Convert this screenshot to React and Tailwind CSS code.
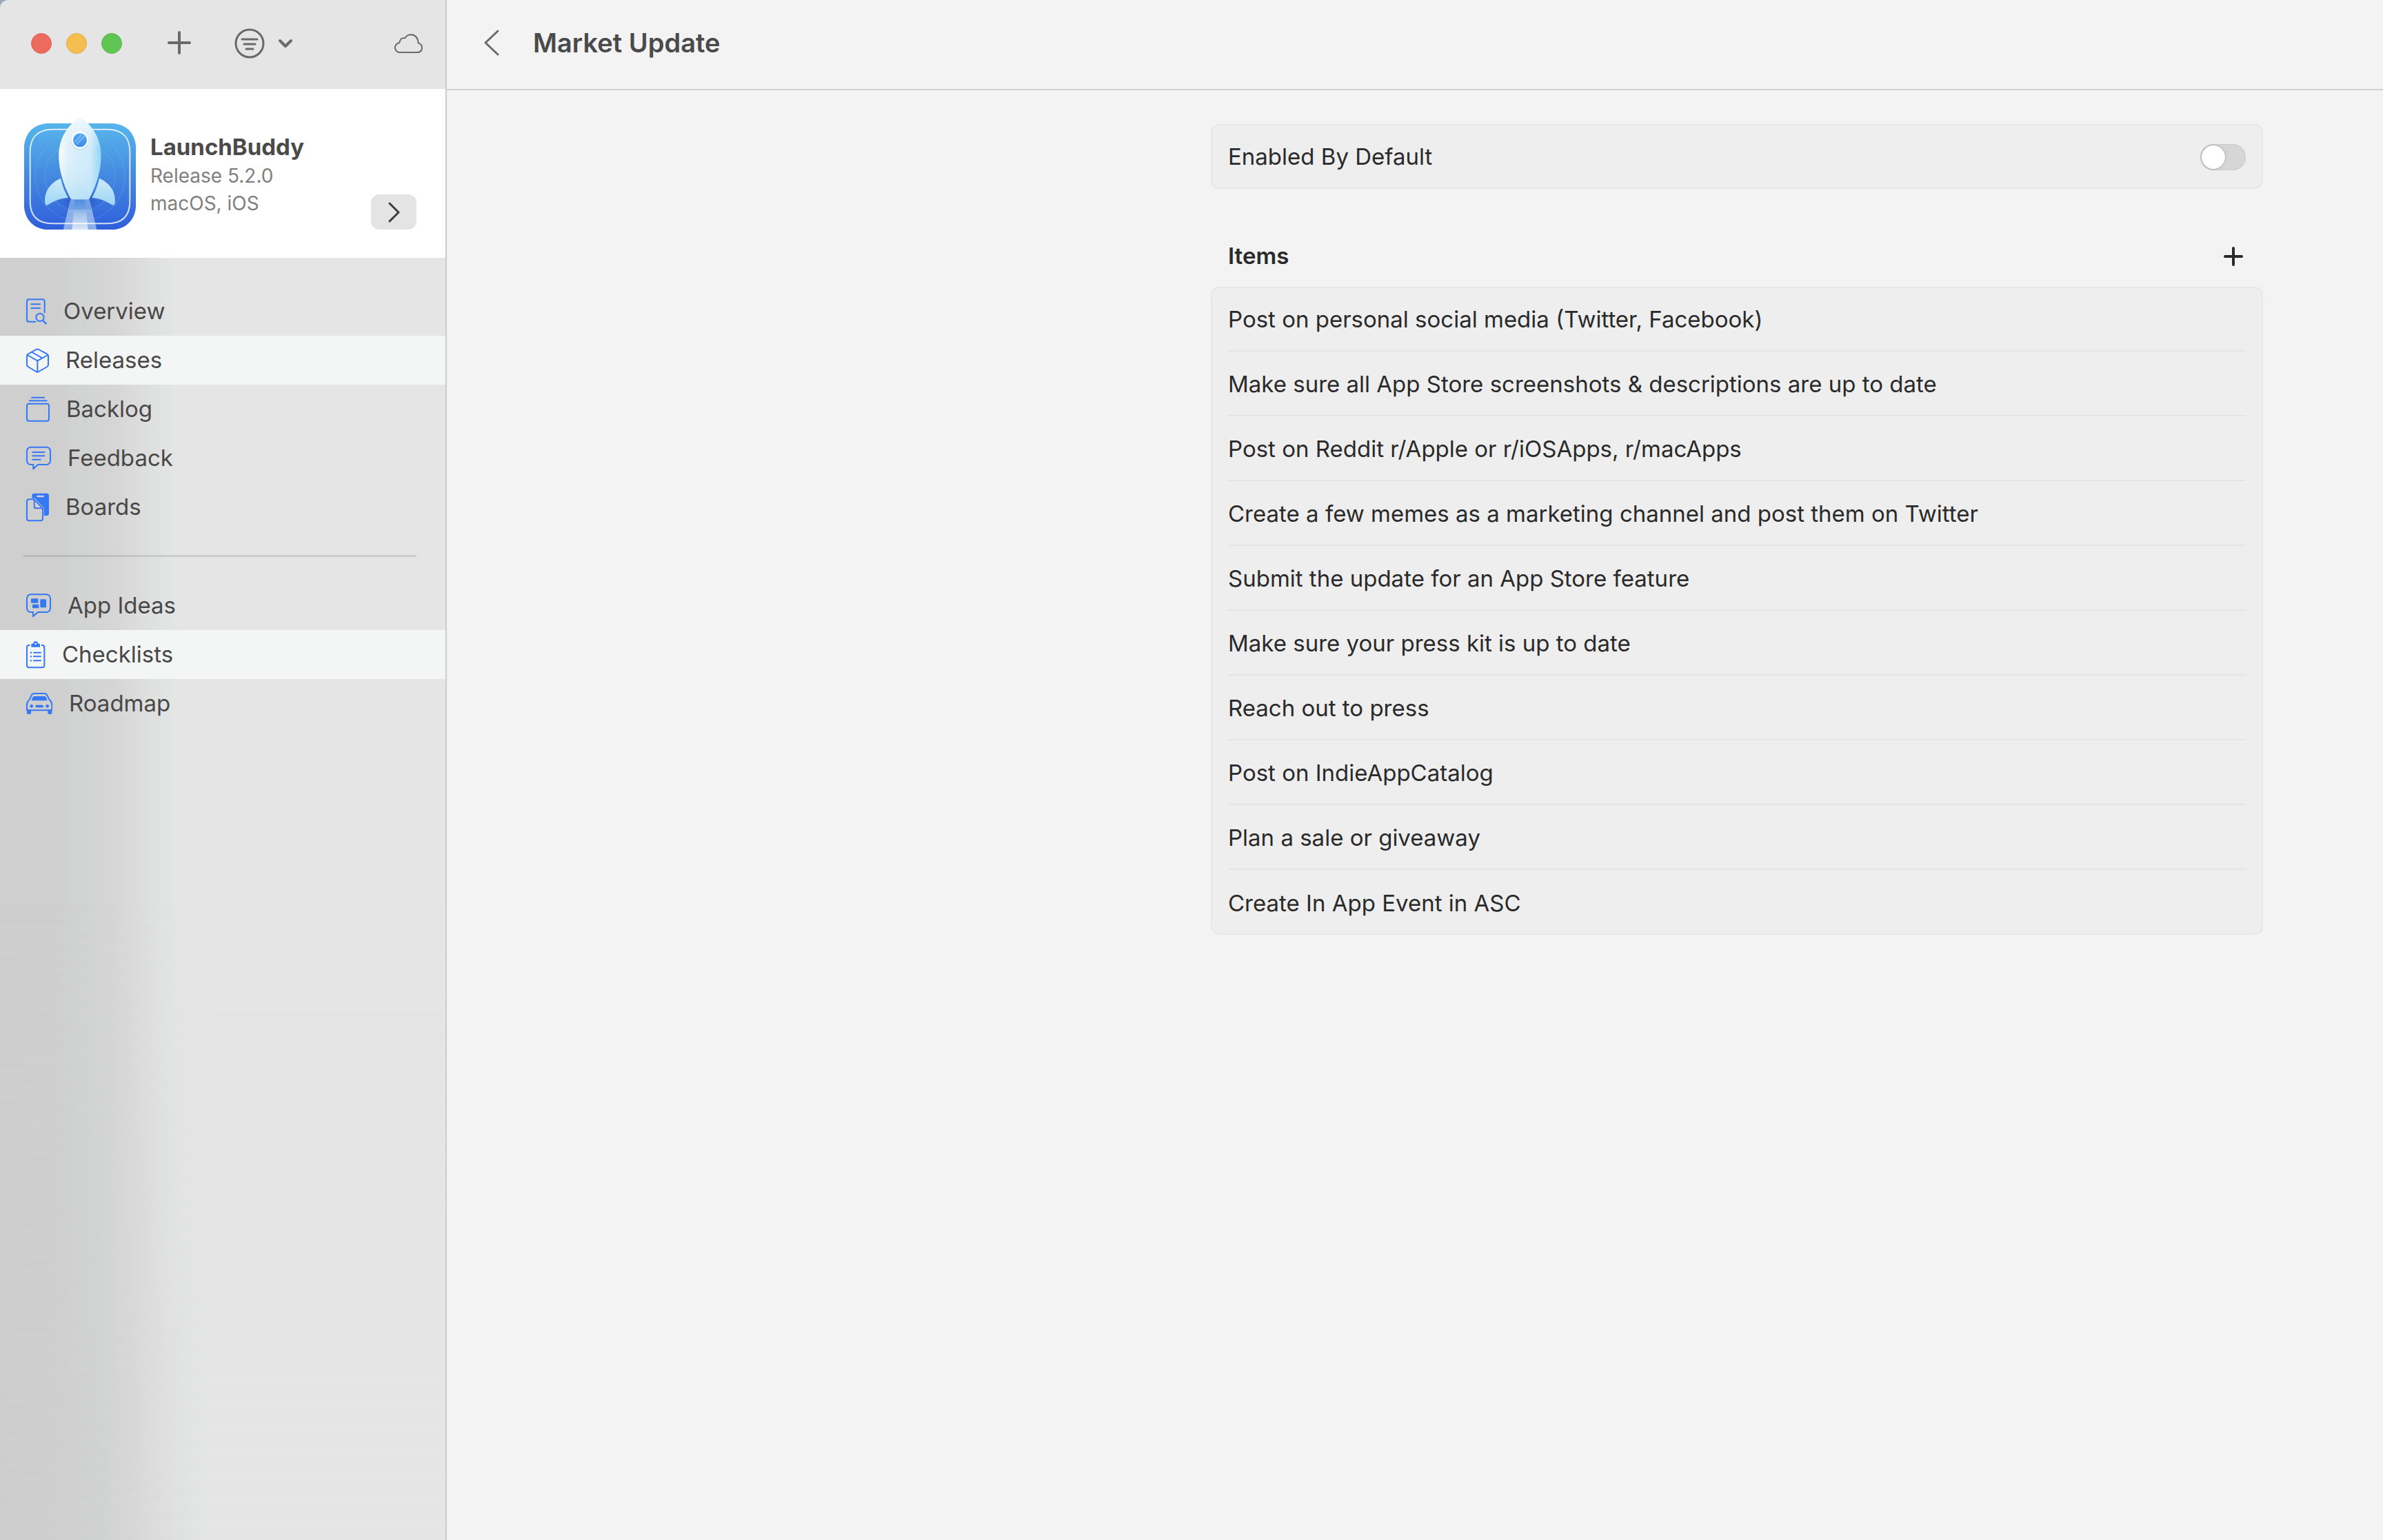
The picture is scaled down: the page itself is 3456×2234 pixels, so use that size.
const PRIMARY_LINKS = [
  { label: "Overview", Icon: OverviewIcon },
  { label: "Releases", Icon: BoxIcon, active: true },
  { label: "Backlog", Icon: StackIcon },
  { label: "Feedback", Icon: FeedbackIcon },
  { label: "Boards", Icon: BoardsIcon },
];

const SECONDARY_LINKS = [
  { label: "App Ideas", Icon: IdeasIcon },
  { label: "Checklists", Icon: ClipboardIcon, active: true },
  { label: "Roadmap", Icon: CarIcon },
];

const ITEMS = [
  "Post on personal social media (Twitter, Facebook)",
  "Make sure all App Store screenshots & descriptions are up to date",
  "Post on Reddit r/Apple or r/iOSApps, r/macApps",
  "Create a few memes as a marketing channel and post them on Twitter",
  "Submit the update for an App Store feature",
  "Make sure your press kit is up to date",
  "Reach out to press",
  "Post on IndieAppCatalog",
  "Plan a sale or giveaway",
  "Create In App Event in ASC",
];

const lineProps = {
  fill: "none",
  stroke: "currentColor",
  strokeWidth: 6,
  strokeLinecap: "round",
  strokeLinejoin: "round",
  "aria-hidden": true,
};

function OverviewIcon() {
  return (
    <svg className="h-[38px] w-[30px] shrink-0" viewBox="115 91 90 114" {...lineProps}>
      <path d="M155 192H127a9 9 0 0 1-9-9V104a9 9 0 0 1 9-9H186a9 9 0 0 1 9 9V152" />
      <path d="M137 116H175M137 133H175" />
      <circle cx="175" cy="173" r="17" />
      <path d="M188 187L201 200" strokeWidth="7" />
    </svg>
  );
}

function BoxIcon() {
  return (
    <svg className="h-[36px] w-[33px] shrink-0" viewBox="115 312 99 108" {...lineProps}>
      <path d="M158 318q6-3 12 0L206 338q5 3 5 8V385q0 5-5 8L170 414q-6 3-12 0L123 393q-5-3-5-8V346q0-5 5-8Z" />
      <path d="M120 342L164 367L209 342M164 367V415M140 330L185 355" />
    </svg>
  );
}

function StackIcon() {
  return (
    <svg className="h-[37px] w-[34px] shrink-0" viewBox="115 520 102 111" {...lineProps}>
      <rect x="118" y="552" width="96" height="75" rx="9" />
      <path d="M129 539H204M139 525H194" />
    </svg>
  );
}

function FeedbackIcon() {
  return (
    <svg className="h-[35px] w-[36px] shrink-0" viewBox="115 741 108 105" {...lineProps}>
      <path d="M135 746H203a17 17 0 0 1 17 17V805a17 17 0 0 1-17 17H166L146 841V822H135a17 17 0 0 1-17-17V763a17 17 0 0 1 17-17Z" />
      <path d="M143 768H194M143 784H194M143 800H177" />
    </svg>
  );
}

function BoardsIcon() {
  return (
    <svg className="h-[42px] w-[33px] shrink-0" viewBox="115 941 99 126" {...lineProps}>
      <rect x="140" y="943" width="74" height="97" rx="10" fill="currentColor" stroke="none" />
      <path d="M164 956H189" stroke="#d2d3d3" strokeWidth="7" />
      <path d="M127 969H150L187 1008V1053a9 9 0 0 1-9 9H127a9 9 0 0 1-9-9V978a9 9 0 0 1 9-9Z" fill="#d0d0d0" stroke="#d0d0d0" strokeWidth="10" />
      <path d="M127 969H149L187 1008V1053a9 9 0 0 1-9 9H127a9 9 0 0 1-9-9V978a9 9 0 0 1 9-9Z" />
      <path d="M150 971V1000a8 8 0 0 0 8 8H186" />
    </svg>
  );
}

function IdeasIcon() {
  return (
    <svg className="h-[35px] w-[36px] shrink-0" viewBox="55 62 108 105" {...lineProps}>
      <path d="M75 66H143a17 17 0 0 1 17 17V126a17 17 0 0 1-17 17H106L85 162V143H75a17 17 0 0 1-17-17V83a17 17 0 0 1 17-17Z" />
      <g fill="currentColor" stroke="none">
        <rect x="76" y="84" width="31" height="19" rx="3" />
        <rect x="116" y="87" width="26" height="36" rx="3" />
        <rect x="82" y="109" width="28" height="17" rx="3" />
      </g>
    </svg>
  );
}

function ClipboardIcon() {
  return (
    <svg className="h-[40px] w-[28px] shrink-0" viewBox="55 271 84 120" {...lineProps}>
      <path d="M69 289H67a9 9 0 0 0-9 9V377a9 9 0 0 0 9 9H125a9 9 0 0 0 9-9V298a9 9 0 0 0-9-9H123" />
      <path d="M77 297V286q0-4 4-4H86a10 10 0 0 1 20 0H111q4 0 4 4V297Z" fill="currentColor" stroke="none" />
      <circle cx="96" cy="283" r="4" fill="#f4f6f5" stroke="none" />
      <path d="M75 321H76M75 338H76M75 356H76" strokeWidth="7" />
      <path d="M88 321H118M88 338H118M88 356H118" />
    </svg>
  );
}

function CarIcon() {
  return (
    <svg className="h-[31px] w-[38px] shrink-0" viewBox="55 492 114 93" {...lineProps}>
      <path d="M58 545q0-14 11-23L78 503q4-8 13-8H133q9 0 13 8L156 522q11 9 11 23V568H58Z" />
      <g fill="currentColor" stroke="none">
        <path d="M90 507H135q5 0 7 5l5 14H78l5-14q2-5 7-5Z" />
        <circle cx="78" cy="550" r="7" />
        <circle cx="147" cy="550" r="7" />
        <rect x="95" y="545" width="35" height="11" rx="5" />
        <path d="M58 566H76V580q0 5-5 5H63q-5 0-5-5ZM149 566H167V580q0 5-5 5H154q-5 0-5-5Z" />
      </g>
    </svg>
  );
}

function CloudIcon() {
  return (
    <svg className="h-[30px] w-[42px]" viewBox="1053 83 126 90" {...lineProps}>
      <path d="M1079 167a21 21 0 0 1-4-42q2-23 25-21q8-14 26-14q28 2 31 36q16 6 16 21q-1 20-21 20Z" />
    </svg>
  );
}

function RocketLogo() {
  return (
    <svg className="size-[164px] shrink-0" viewBox="42 28 492 492" role="img" aria-label="LaunchBuddy icon">
      <defs>
        <linearGradient id="tile" x1="0" y1="0" x2="0" y2="1">
          <stop offset="0" stopColor="#57b5ea" />
          <stop offset="0.5" stopColor="#4489e0" />
          <stop offset="1" stopColor="#2f5edb" />
        </linearGradient>
        <linearGradient id="hull" x1="0" y1="0" x2="1" y2="0">
          <stop offset="0" stopColor="#ffffff" />
          <stop offset="0.2" stopColor="#e0f1fb" />
          <stop offset="0.75" stopColor="#cdeafa" />
          <stop offset="1" stopColor="#7fcdf7" />
        </linearGradient>
        <linearGradient id="hullShade" x1="0" y1="0" x2="0" y2="1">
          <stop offset="0" stopColor="#ffffff" stopOpacity="0.9" />
          <stop offset="0.4" stopColor="#e2f2fc" stopOpacity="0.2" />
          <stop offset="1" stopColor="#a6daf5" stopOpacity="0.8" />
        </linearGradient>
        <linearGradient id="fin" x1="0" y1="0" x2="0" y2="1">
          <stop offset="0" stopColor="#cdeafc" />
          <stop offset="1" stopColor="#9ed6f3" />
        </linearGradient>
        <linearGradient id="glass" x1="0" y1="0" x2="0" y2="1">
          <stop offset="0" stopColor="#58aaf0" />
          <stop offset="1" stopColor="#3b8df0" />
        </linearGradient>
        <linearGradient id="flame" x1="0" y1="0" x2="0" y2="1">
          <stop offset="0" stopColor="#4f93dd" />
          <stop offset="0.5" stopColor="#a3c3ec" />
          <stop offset="1" stopColor="#dbe6f9" />
        </linearGradient>
        <radialGradient id="shade">
          <stop offset="0" stopColor="#1f48bd" stopOpacity="0.8" />
          <stop offset="1" stopColor="#1f48bd" stopOpacity="0" />
        </radialGradient>
        <clipPath id="tileClip">
          <path d="M160 54H416C496 54 532 104 532 170V402C532 468 496 518 416 518H160C80 518 44 468 44 402V170C44 104 80 54 160 54Z" />
        </clipPath>
      </defs>
      <g clipPath="url(#tileClip)">
        <rect x="44" y="54" width="488" height="464" fill="url(#tile)" />
        <g fill="none" stroke="#7fc4f5" strokeOpacity="0.22" strokeWidth="4">
          <circle cx="288" cy="285" r="152" />
          <circle cx="288" cy="285" r="195" />
        </g>
        <ellipse cx="288" cy="392" rx="100" ry="50" fill="url(#shade)" />
        <path d="M247 385H329L361 518H215Z" fill="#9dbcec" fillOpacity="0.85" />
        <path d="M266 385H310L323 518H253Z" fill="url(#flame)" />
        <path d="M247 385H329L336 430H240Z" fill="#4484dc" fillOpacity="0.35" />
      </g>
      <path d="M170 81H406C476 81 505 120 505 178V394C505 456 476 491 406 491H170C100 491 71 456 71 394V178C71 120 100 81 170 81Z" fill="none" stroke="#ffffff" strokeOpacity="0.78" strokeWidth="6" />
      <path d="M204 294C162 312 130 350 136 402Q138 414 148 410C176 392 206 380 237 379Q214 340 204 294Z" fill="url(#fin)" />
      <path d="M372 294C414 312 446 350 440 402Q438 414 428 410C400 392 370 380 340 379Q362 340 372 294Z" fill="url(#fin)" />
      <path d="M288 29C330 54 380 110 380 195C380 265 356 330 330 380Q328 386 321 386H257Q250 386 246 380C220 330 196 265 196 195C196 110 246 54 288 29Z" fill="url(#hull)" />
      <path d="M288 29C330 54 380 110 380 195C380 265 356 330 330 380Q328 386 321 386H257Q250 386 246 380C220 330 196 265 196 195C196 110 246 54 288 29Z" fill="url(#hullShade)" fillOpacity="0.75" />
      <circle cx="288" cy="131" r="40" fill="#9fcdf5" fillOpacity="0.5" />
      <circle cx="288" cy="128" r="34" fill="url(#glass)" stroke="#fbfdff" strokeWidth="8" />
      <path d="M264 137L296 104M272 146L312 107" stroke="#8cc8f8" strokeOpacity="0.7" strokeWidth="6" />
    </svg>
  );
}

function NavLink({ label, Icon, active }) {
  return (
    <a
      href={"#" + label.toLowerCase().replace(" ", "-")}
      aria-current={active ? "true" : undefined}
      className={
        "relative flex h-[71px] items-center gap-6 pl-[38px] text-[33px] text-[#484848] " +
        (active ? "bg-[#f4f6f5]" : "")
      }
    >
      <span className="text-[#3478f6]">
        <Icon />
      </span>
      {label}
    </a>
  );
}

function Sidebar() {
  return (
    <aside className="flex w-[648px] shrink-0 flex-col overflow-hidden rounded-tl-[12px] border-r-2 border-[#cdcdcd] bg-[#e5e5e5]">
      <div className="flex h-[129px] items-center pb-[3px] pl-[45px] pr-8 text-[#6a6a6a]">
        <div className="flex gap-[21px]">
          <button aria-label="Close" className="size-[30px] rounded-full border border-[#dd6358] bg-[#ec6a5e]" />
          <button aria-label="Minimize" className="size-[30px] rounded-full border border-[#e0ac45] bg-[#f4bf4f]" />
          <button aria-label="Zoom" className="size-[30px] rounded-full border border-[#58b648] bg-[#61c554]" />
        </div>
        <button aria-label="Add" className="mb-[3px] ml-[65px]">
          <svg className="block size-[36px]" viewBox="0 0 36 36" {...lineProps} strokeWidth="4">
            <path d="M18 3V33M3 18H33" />
          </svg>
        </button>
        <button aria-label="Filter" className="ml-[62px] flex items-center gap-[19px]">
          <svg className="size-[44px]" viewBox="0 0 44 44" {...lineProps} strokeWidth="3">
            <circle cx="22" cy="22" r="20" />
            <path d="M11 16H33M14 23H30M17 30H27" />
          </svg>
          <svg className="h-[14px] w-[22px]" viewBox="0 0 22 14" {...lineProps} strokeWidth="4">
            <path d="M3 3L11 11L19 3" />
          </svg>
        </button>
        <button aria-label="Sync" className="ml-auto">
          <CloudIcon />
        </button>
      </div>

      <div className="flex h-[245px] items-center gap-5 bg-white pl-[34px] pr-[42px]">
        <RocketLogo />
        <div className="pt-[2px] text-[28px] leading-10 text-[#808080]">
          <h2 className="text-[33px] font-bold leading-[44px] text-[#4a4a4a]">LaunchBuddy</h2>
          <p>Release 5.2.0</p>
          <p>macOS, iOS</p>
        </div>
        <button aria-label="Show app details" className="mb-[41px] ml-auto flex h-[51px] w-[66px] items-center justify-center self-end rounded-[12px] bg-[#e4e4e4] text-[#3c3c3c]">
          <svg className="h-[30px] w-[20px]" viewBox="0 0 20 30" {...lineProps} strokeWidth="3">
            <path d="M4 2L17 15L4 28" />
          </svg>
        </button>
      </div>

      <div className="relative flex-1 bg-[linear-gradient(90deg,#cfcfcf_0px,#cfcfcf_85px,#d0d3d1_105px,#d5d5d5_160px,#dddddd_205px,#e2e4e3_242px,#e5e5e5_262px)] pt-[42px]">
        <div className="absolute inset-0 bg-[linear-gradient(90deg,#cdcdcd_0px,#cfcfcf_110px,#d0d2d1_145px,#d6d6d6_190px,#dddddd_235px,#e1e3e2_275px,#e5e5e5_310px)] [mask-image:linear-gradient(to_bottom,transparent_50%,black_100%)]" />
        <nav aria-label="App">
          {PRIMARY_LINKS.map((link) => (
            <NavLink key={link.label} {...link} />
          ))}
        </nav>
        <hr className="relative ml-[34px] mr-[42px] mt-[34px] border-t-[3px] border-black/10" />
        <nav aria-label="Planning" className="mt-[35px]">
          {SECONDARY_LINKS.map((link) => (
            <NavLink key={link.label} {...link} />
          ))}
        </nav>
      </div>
    </aside>
  );
}

export default function App() {
  return (
    <div className="flex min-h-screen bg-[#9aa9b4] font-['Inter','Liberation_Sans',sans-serif] text-[33px] text-[#2a2a2a]">
      <Sidebar />
      <main className="flex-1 bg-[#f3f3f3]">
        <header className="flex h-[131px] items-center gap-12 border-b-2 border-[#cfcfcf] pb-[5px] pl-[53px]">
          <button aria-label="Back" className="text-[#6a6a6a]">
            <svg className="block h-[38px] w-[24px]" viewBox="0 0 24 38" {...lineProps} strokeWidth="3">
              <path d="M21 2L3 19L21 36" />
            </svg>
          </button>
          <h1 className="text-[38px] font-semibold text-[#4a4a4a]">Market Update</h1>
        </header>

        <div className="grid grid-cols-[1108fr_1526fr_174fr] pt-[49px]">
          <div className="col-start-2">
            <label className="flex h-[94px] items-center justify-between rounded-[12px] bg-[#eeeeee] pl-[25px] pr-[25px] pt-[2px] inset-ring-2 inset-ring-[#e7e7e7]">
              Enabled By Default
              <input
                type="checkbox"
                role="switch"
                className="flex h-[38px] w-[66px] appearance-none items-center rounded-full bg-[#d6d6d6] px-[2px] inset-ring-1 inset-ring-[#cbcbcb] before:size-[34px] before:rounded-full before:bg-white before:shadow-[0_0_3px_rgba(0,0,0,0.35)] checked:justify-end checked:bg-[#3478f6]"
              />
            </label>

            <div className="mb-[22px] mt-[76px] flex h-11 items-center justify-between pl-[25px] pr-7">
              <h2 className="font-semibold">Items</h2>
              <button aria-label="Add item">
                <svg className="block size-[30px]" viewBox="0 0 30 30" {...lineProps} strokeWidth="4">
                  <path d="M15 3V27M3 15H27" />
                </svg>
              </button>
            </div>

            <ul className="rounded-[12px] bg-[#eeeeee] px-[25px] inset-ring-2 inset-ring-[#e7e7e7]">
              {ITEMS.map((item) => (
                <li key={item} className="flex h-[94px] items-center border-b-2 border-[#e4e4e4] pt-1 last:border-b-0">
                  {item}
                </li>
              ))}
            </ul>
          </div>
        </div>
      </main>
    </div>
  );
}
